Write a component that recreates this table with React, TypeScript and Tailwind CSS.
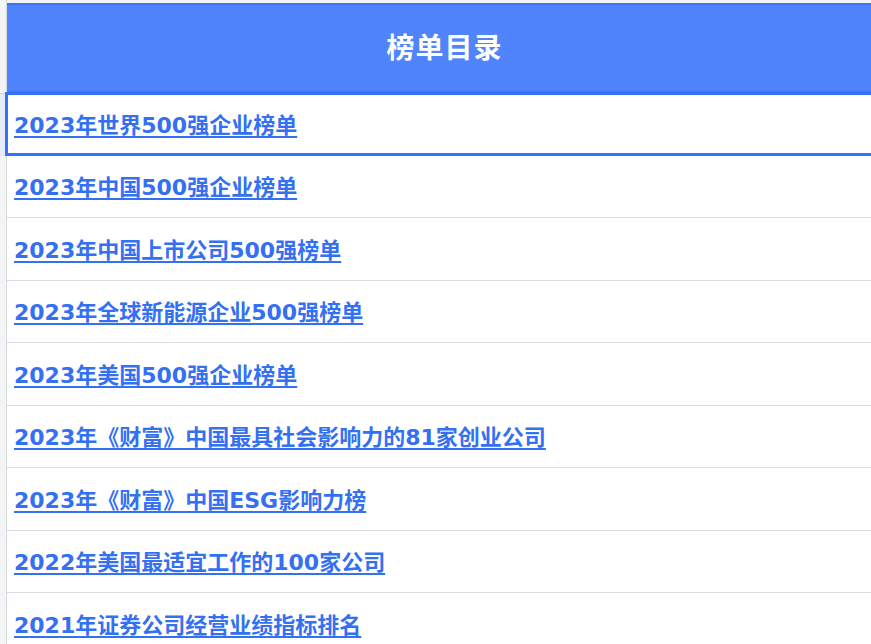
const rows = [
  { title: "2023年世界500强企业榜单", h: "h-[62px]" },
  { title: "2023年中国500强企业榜单", h: "h-[62px]" },
  { title: "2023年中国上市公司500强榜单", h: "h-[63px]" },
  { title: "2023年全球新能源企业500强榜单", h: "h-[62px]" },
  { title: "2023年美国500强企业榜单", h: "h-[63px]" },
  { title: "2023年《财富》中国最具社会影响力的81家创业公司", h: "h-[62px]" },
  { title: "2023年《财富》中国ESG影响力榜", h: "h-[63px]" },
  { title: "2022年美国最适宜工作的100家公司", h: "h-[62px]" },
  { title: "2021年证券公司经营业绩指标排名", h: "h-[63px]" },
]

export default function App() {
  return (
    <div
      className="w-[871px] h-[644px] overflow-hidden bg-white"
      style={{ fontFamily: '"DejaVu Sans", "Noto Sans CJK SC", sans-serif' }}
    >
      {/* top strip */}
      <div className="flex h-[3px]">
        <div className="w-[7px] bg-[#f3f4f6] border-r border-[#d6d8dc]" />
        <div className="flex-1 bg-[#f3f4f6]" />
      </div>

      {/* header */}
      <div className="flex h-[91px] border-b border-[#d0d3d8]">
        <div className="w-[7px] shrink-0 bg-[#f3f4f6] border-r border-[#d6d8dc]" />
        <div className="flex-1 flex items-center justify-center pl-[11px] bg-[#4f84fc] border-t-2 border-b-2 border-[#3a73fa]">
          <span className="text-[28px] font-bold text-white tracking-[1px] mt-[1px]">榜单目录</span>
        </div>
      </div>

      {rows.map((row, i) => {
        const selected = i === 0
        return (
          <div key={row.title} className={`flex ${row.h}`}>
            <div
              className={`w-[7px] shrink-0 border-r border-[#d6d8dc] ${
                selected ? "bg-[#e6ecf8]" : "bg-[#f3f4f6]"
              }`}
            />
            <div
              className={`flex-1 flex items-center ${
                selected
                  ? "-ml-[2px] -mt-[2px] border-[3px] border-r-0 border-[#3472fb] pl-[6px]"
                  : "border-b border-[#dcdee2] pl-[7px]"
              }`}
            >
              <a
                href="#"
                className="text-[22px] leading-none pt-[3px] font-bold text-[#3470f2] underline decoration-[1.5px] underline-offset-[3px] whitespace-nowrap"
              >
                {row.title}
              </a>
            </div>
          </div>
        )
      })}
    </div>
  )
}
